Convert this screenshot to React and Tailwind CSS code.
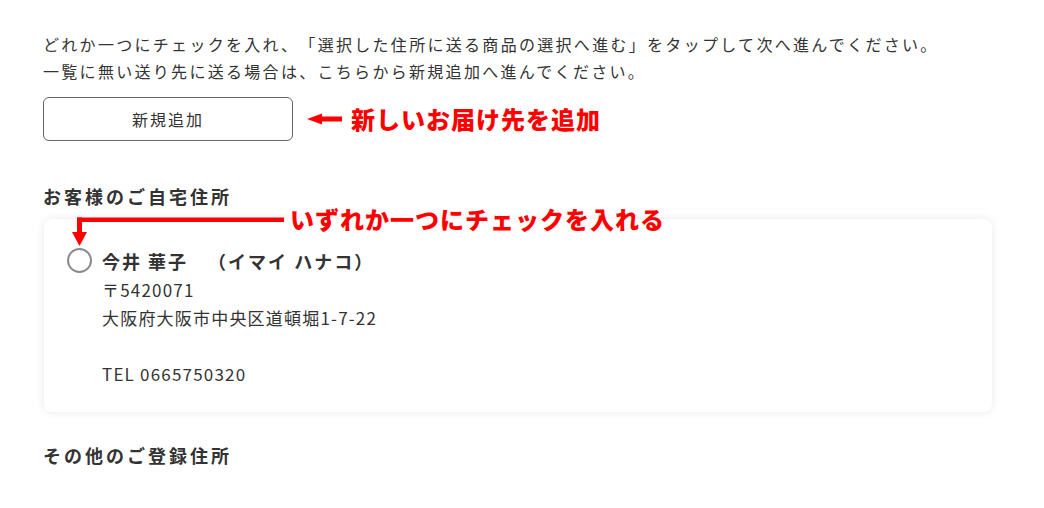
export default function App() {
  return (
    <div className="min-h-screen bg-white font-['Noto_Sans_CJK_JP','Noto_Sans',sans-serif] text-[#333] [text-spacing-trim:space-all]">
      <div className="w-[992px] pl-[43px] pt-[31px]">
        <p className="text-[16px] leading-[27px] tracking-[2.3px]">
          どれか一つにチェックを入れ、「選択した住所に送る商品の選択へ進む」をタップして次へ進んでください。
          <br />
          一覧に無い送り先に送る場合は、こちらから新規追加へ進んでください。
        </p>

        <div className="mt-[12px] flex items-center">
          <button className="w-[250px] h-[44px] border border-[#666] rounded-[6px] bg-white text-[16px] tracking-[2px] text-[#333]">
            新規追加
          </button>
          <div className="ml-[14px] flex items-center gap-[9px]">
            <svg width="35" height="12" viewBox="0 0 35 12">
              <polygon points="0,6 15,0.5 15,11.5" fill="#ff0000" />
              <rect x="14" y="3.5" width="21" height="5" fill="#ff0000" />
            </svg>
            <span className="text-[24px] leading-[28px] font-black tracking-[1px] text-[#ff0000]">
              新しいお届け先を追加
            </span>
          </div>
        </div>

        <h2 className="mt-[41px] text-[18px] leading-[28px] font-bold tracking-[3px] text-[#333]">
          お客様のご自宅住所
        </h2>

        <div className="relative mt-[9px] ml-[1px] rounded-[8px] bg-white shadow-[0_0_10px_rgba(0,0,0,0.09)] pt-[28px] pb-[24px] pl-[23px]">
          <svg className="absolute left-[28px] top-[-3px]" width="212" height="31" viewBox="0 0 212 31">
            <rect x="5" y="1.5" width="207" height="4.5" fill="#ff0000" />
            <rect x="5" y="1.5" width="5" height="16" fill="#ff0000" />
            <polygon points="0,16 15,16 7.5,30" fill="#ff0000" />
          </svg>
          <span className="absolute left-[246px] top-[-14px] text-[24px] leading-[28px] font-black tracking-[1px] text-[#ff0000]">
            いずれか一つにチェックを入れる
          </span>

          <div className="flex gap-[10px]">
            <div className="mt-[1px] h-[25px] w-[25px] rounded-full border-2 border-[#8a8a8a] bg-white" />
            <div>
              <div className="text-[18px] leading-[28px] font-bold tracking-[2px] text-[#333]">
                今井 華子　（イマイ ハナコ）
              </div>
              <div className="mt-[1px] text-[17px] leading-[28px] tracking-[1.2px] text-[#333]">
                <div>〒5420071</div>
                <div>大阪府大阪市中央区道頓堀1-7-22</div>
                <div>&nbsp;</div>
                <div>TEL 0665750320</div>
              </div>
            </div>
          </div>
        </div>

        <h2 className="mt-[29px] text-[18px] leading-[28px] font-bold tracking-[3px] text-[#333]">
          その他のご登録住所
        </h2>
      </div>
    </div>
  );
}
